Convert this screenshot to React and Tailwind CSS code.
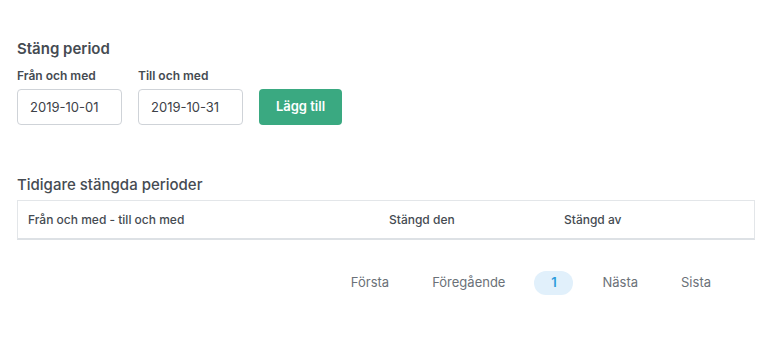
const columns = [
  { label: "Från och med - till och med", width: "w-[361px]" },
  { label: "Stängd den", width: "w-[175px]" },
  { label: "Stängd av", width: "flex-1" },
];

const pages = ["Första", "Föregående", "1", "Nästa", "Sista"];

const DateField = ({ label, value }) => (
  <div className="flex flex-col">
    <label className="text-[12px] leading-[16px] font-semibold text-[#454b52] mb-[5px]">
      {label}
    </label>
    <input
      type="text"
      defaultValue={value}
      className="w-[105px] h-[36px] px-[12px] border border-[#cfd3d8] rounded-[4px] text-[13px] text-[#3d4248] outline-none"
    />
  </div>
);

const App = () => {
  return (
    <div
      className="w-[783px] h-[345px] bg-white px-[17px] pt-[39px]"
      style={{ fontFamily: "Inter, 'Liberation Sans', sans-serif" }}
    >
      {/* Close period form */}
      <h2 className="text-[15px] leading-[20px] font-semibold text-[#454b52]">
        Stäng period
      </h2>
      <div className="flex items-end gap-[16px] mt-[9px]">
        <DateField label="Från och med" value="2019-10-01" />
        <DateField label="Till och med" value="2019-10-31" />
        <button className="w-[83px] h-[36px] rounded-[4px] bg-[#3aa981] text-white text-[13px] font-semibold">
          Lägg till
        </button>
      </div>

      {/* Previous periods */}
      <h2 className="mt-[50px] text-[15px] leading-[20px] font-medium text-[#454b52]">
        Tidigare stängda perioder
      </h2>
      <div className="mt-[5px] w-[738px] border border-[#e3e6e9] border-b-2 border-b-[#dde1e5]">
        <div className="flex h-[37px] items-center pl-[10px]">
          {columns.map((col) => (
            <div
              key={col.label}
              className={`${col.width} text-[12px] font-medium text-[#454b52]`}
            >
              {col.label}
            </div>
          ))}
        </div>
      </div>

      {/* Pagination */}
      <div className="mt-[31px] w-[738px] flex justify-end gap-[15px] pr-[30px]">
        {pages.map((p) =>
          p === "1" ? (
            <button
              key={p}
              className="h-[24px] w-[39px] rounded-full bg-[#e1f0fb] text-[#2d9cdb] text-[13px] font-semibold"
            >
              {p}
            </button>
          ) : (
            <button
              key={p}
              className="h-[24px] px-[14px] text-[13px] text-[#6b7178]"
            >
              {p}
            </button>
          )
        )}
      </div>
    </div>
  );
};

export default App;
